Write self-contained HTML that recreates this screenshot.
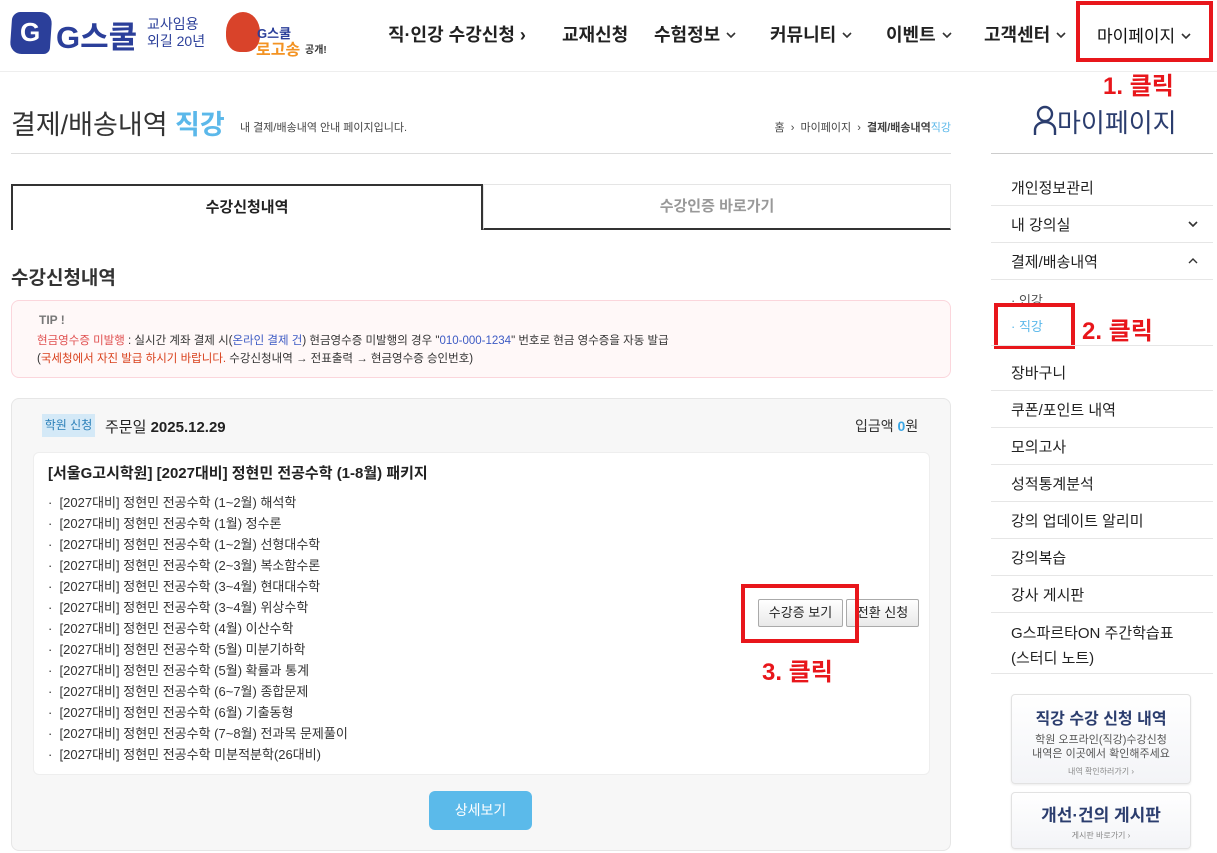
<!DOCTYPE html>
<html><head><meta charset="utf-8">
<style>
*{box-sizing:border-box;margin:0;padding:0}
body{width:1217px;height:853px;overflow:hidden;background:#fff;font-family:"Liberation Sans","Noto Sans CJK KR",sans-serif;color:#222;position:relative}
.a{position:absolute;white-space:nowrap}
.nav{font-size:18px;font-weight:bold;color:#222;top:21px}
.nav svg,.ch{vertical-align:3px;margin-left:6px}
.red{border:4px solid #e8161b}
.rl{color:#e8161b;font-weight:bold;font-size:24px}
.sm{font-size:15px;color:#222;left:1011px}
.sl{position:absolute;left:991px;width:222px;height:1px;background:#e6e6e6}
.li{font-size:13px;color:#333;left:48px}
.btn{position:absolute;height:28px;border:1px solid #aaa;border-radius:2px;background:linear-gradient(#fff,#e9e9e9);font-size:13px;text-align:center;line-height:26px;color:#222}
.box{position:absolute;border:1px solid #e2e2e2;border-radius:4px;background:linear-gradient(#fff,#f3f4f7);box-shadow:0 1px 2px rgba(0,0,0,.08);text-align:center}
</style></head><body>
<svg width="0" height="0" style="position:absolute"><defs><symbol id="d" viewBox="0 0 10 6"><path d="M1 1l4 4 4-4" fill="none" stroke="#333" stroke-width="1.6"/></symbol><symbol id="u" viewBox="0 0 10 6"><path d="M1 5l4-4 4 4" fill="none" stroke="#333" stroke-width="1.4"/></symbol></defs></svg>
<!-- header -->
<div class="a" style="left:11px;top:12px;width:40px;height:42px;background:#2b3f9a;border-radius:8px 12px 6px 12px;transform:skew(-4deg)"></div>
<div class="a" style="left:20px;top:17px;font-size:26px;font-weight:bold;color:#fff">G</div>
<div class="a" style="left:56px;top:12px;font-size:31px;font-weight:bold;color:#2b3f9a">G스쿨</div>
<div class="a" style="left:147px;top:16px;font-size:14px;color:#2b3f9a;line-height:17px">교사임용<br>외길 20년</div>
<div class="a" style="left:226px;top:12px;width:34px;height:40px;background:#d9432a;border-radius:50% 50% 40% 40%"></div>
<div class="a" style="left:257px;top:23px;font-size:13px;font-weight:bold;color:#2b3f9a">G스쿨</div>
<div class="a" style="left:256px;top:36px;font-size:16px;font-weight:bold;color:#f39323">로고송</div>
<div class="a" style="left:305px;top:41px;font-size:10px;font-weight:bold;color:#333">공개!</div>
<div class="a nav" style="left:388px">직·인강 수강신청 ›</div>
<div class="a nav" style="left:562px">교재신청</div>
<div class="a nav" style="left:654px">수험정보<svg width="10" height="6"><use href="#d"/></svg></div>
<div class="a nav" style="left:770px">커뮤니티<svg width="10" height="6"><use href="#d"/></svg></div>
<div class="a nav" style="left:886px">이벤트<svg width="10" height="6"><use href="#d"/></svg></div>
<div class="a nav" style="left:984px">고객센터<svg width="10" height="6"><use href="#d"/></svg></div>
<div class="a nav" style="left:1097px;font-weight:normal;color:#111;font-size:17px;top:22px">마이페이지<svg width="10" height="6"><use href="#d"/></svg></div>
<div class="a red" style="left:1076px;top:1px;width:137px;height:61px"></div>
<div class="a rl" style="left:1103px;top:66px">1. 클릭</div>
<div class="a" style="left:0;top:71px;width:1217px;height:1px;background:#eee"></div>
<!-- title -->
<div class="a" style="left:11px;top:103px;font-size:27px;color:#333">결제/배송내역 <span style="color:#5bb8ea;font-weight:bold">직강</span></div>
<div class="a" style="left:240px;top:119px;font-size:11px;color:#444">내 결제/배송내역 안내 페이지입니다.</div>
<div class="a" style="right:266px;top:119px;font-size:11px;color:#444">홈 &nbsp;›&nbsp; 마이페이지 &nbsp;›&nbsp; <b>결제/배송내역</b><span style="color:#5bb8ea">직강</span></div>
<div class="a" style="left:11px;top:153px;width:940px;height:1px;background:#ddd"></div>
<!-- tabs -->
<div class="a" style="left:11px;top:184px;width:472px;height:46px;border:2px solid #333;border-bottom:none;text-align:center;line-height:44px;font-size:15px;font-weight:bold">수강신청내역</div>
<div class="a" style="left:483px;top:184px;width:468px;height:46px;border:1px solid #e5e5e5;border-bottom:2px solid #333;text-align:center;line-height:44px;font-size:15px;font-weight:bold;color:#999">수강인증 바로가기</div>
<div class="a" style="left:11px;top:263px;font-size:19px;font-weight:bold;color:#333">수강신청내역</div>
<!-- tip -->
<div class="a" style="left:11px;top:300px;width:940px;height:78px;border:1px solid #fbd6dc;border-radius:8px;background:#fff8f8"></div>
<div class="a" style="left:39px;top:313px;font-size:12px;color:#777;font-weight:bold">TIP !</div>
<div class="a" style="left:37px;top:332px;font-size:11.5px;color:#333"><span style="color:#e05050">현금영수증 미발행</span> : 실시간 계좌 결제 시(<span style="color:#3d5bc4">온라인 결제 건</span>) 현금영수증 미발행의 경우 "<span style="color:#3d5bc4">010-000-1234</span>" 번호로 현금 영수증을 자동 발급</div>
<div class="a" style="left:37px;top:350px;font-size:11.5px;color:#333">(<span style="color:#d8401c">국세청에서 자진 발급 하시기 바랍니다.</span> 수강신청내역 → 전표출력 → 현금영수증 승인번호)</div>
<!-- order -->
<div class="a" style="left:11px;top:398px;width:940px;height:453px;border:1px solid #e6e6e6;border-radius:8px;background:#f7f7f7"></div>
<div class="a" style="left:42px;top:414px;width:53px;height:23px;background:#d4e9f7;color:#2a7fb8;font-size:12px;line-height:23px;text-align:center">학원 신청</div>
<div class="a" style="left:105px;top:416px;font-size:15px">주문일 <b>2025.12.29</b></div>
<div class="a" style="left:855px;top:416px;font-size:14px;color:#333">입금액 <b style="color:#3aa7e6">0</b>원</div>
<div class="a" style="left:33px;top:452px;width:897px;height:323px;border:1px solid #eee;border-radius:6px;background:#fff"></div>
<div class="a" style="left:48px;top:462px;font-size:15px;font-weight:bold">[서울G고시학원] [2027대비] 정현민 전공수학 (1-8월) 패키지</div>
<div class="a li" style="top:492px;line-height:21px">
·&nbsp; [2027대비] 정현민 전공수학 (1~2월) 해석학<br>
·&nbsp; [2027대비] 정현민 전공수학 (1월) 정수론<br>
·&nbsp; [2027대비] 정현민 전공수학 (1~2월) 선형대수학<br>
·&nbsp; [2027대비] 정현민 전공수학 (2~3월) 복소함수론<br>
·&nbsp; [2027대비] 정현민 전공수학 (3~4월) 현대대수학<br>
·&nbsp; [2027대비] 정현민 전공수학 (3~4월) 위상수학<br>
·&nbsp; [2027대비] 정현민 전공수학 (4월) 이산수학<br>
·&nbsp; [2027대비] 정현민 전공수학 (5월) 미분기하학<br>
·&nbsp; [2027대비] 정현민 전공수학 (5월) 확률과 통계<br>
·&nbsp; [2027대비] 정현민 전공수학 (6~7월) 종합문제<br>
·&nbsp; [2027대비] 정현민 전공수학 (6월) 기출동형<br>
·&nbsp; [2027대비] 정현민 전공수학 (7~8월) 전과목 문제풀이<br>
·&nbsp; [2027대비] 정현민 전공수학 미분적분학(26대비)</div>
<div class="btn" style="left:758px;top:599px;width:85px">수강증 보기</div>
<div class="btn" style="left:846px;top:599px;width:73px">전환 신청</div>
<div class="a red" style="left:741px;top:584px;width:118px;height:59px"></div>
<div class="a rl" style="left:762px;top:652px">3. 클릭</div>
<div class="a" style="left:429px;top:791px;width:103px;height:39px;background:#5bbaea;border-radius:6px;color:#fff;font-size:14px;text-align:center;line-height:39px">상세보기</div>
<!-- sidebar -->
<div class="a" style="left:1033px;top:103px;font-size:26px;color:#2b3d6e"><svg width="24" height="30" viewBox="0 0 24 30" style="vertical-align:-3px"><circle cx="12" cy="9" r="7" fill="none" stroke="#2b3d6e" stroke-width="2.4"/><path d="M2 30V25a10 8 0 0 1 20 0v5" fill="none" stroke="#2b3d6e" stroke-width="2.4"/></svg>마이페이지</div>
<div class="a" style="left:991px;top:153px;width:222px;height:1px;background:#ccc"></div>
<div class="a sm" style="top:177px">개인정보관리</div>
<div class="sl" style="top:205px"></div>
<div class="a sm" style="top:214px">내 강의실</div><svg class="a" style="left:1188px;top:221px" width="10" height="6"><use href="#d"/></svg>
<div class="sl" style="top:242px"></div>
<div class="a sm" style="top:251px">결제/배송내역</div><svg class="a" style="left:1188px;top:258px" width="10" height="6"><use href="#u"/></svg>
<div class="sl" style="top:279px"></div>
<div class="a" style="left:1011px;top:290px;font-size:13px;color:#555">· 인강</div>
<div class="a" style="left:1011px;top:316px;font-size:13px;color:#5bb8ea">· 직강</div>
<div class="a red" style="left:994px;top:303px;width:81px;height:46px"></div>
<div class="a rl" style="left:1082px;top:311px">2. 클릭</div>
<div class="sl" style="top:345px"></div>
<div class="a sm" style="top:362px">장바구니</div>
<div class="sl" style="top:390px"></div>
<div class="a sm" style="top:399px">쿠폰/포인트 내역</div>
<div class="sl" style="top:427px"></div>
<div class="a sm" style="top:436px">모의고사</div>
<div class="sl" style="top:464px"></div>
<div class="a sm" style="top:473px">성적통계분석</div>
<div class="sl" style="top:501px"></div>
<div class="a sm" style="top:510px">강의 업데이트 알리미</div>
<div class="sl" style="top:538px"></div>
<div class="a sm" style="top:547px">강의복습</div>
<div class="sl" style="top:575px"></div>
<div class="a sm" style="top:584px">강사 게시판</div>
<div class="sl" style="top:612px"></div>
<div class="a sm" style="top:621px;line-height:25px">G스파르타ON 주간학습표<br>(스터디 노트)</div>
<div class="sl" style="top:673px"></div>
<div class="box" style="left:1011px;top:694px;width:180px;height:90px"><div style="margin-top:10px;font-size:16px;font-weight:bold;color:#2b3d6e">직강 수강 신청 내역</div><div style="font-size:11px;color:#555;line-height:14px;margin-top:4px">학원 오프라인(직강)수강신청<br>내역은 이곳에서 확인해주세요</div><div style="font-size:8px;color:#888;margin-top:5px">내역 확인하러가기 ›</div></div>
<div class="box" style="left:1011px;top:792px;width:180px;height:57px"><div style="margin-top:8px;font-size:17px;font-weight:bold;color:#2b3d6e">개선·건의 게시판</div><div style="font-size:8px;color:#888;margin-top:4px">게시판 바로가기 ›</div></div>
</body></html>
